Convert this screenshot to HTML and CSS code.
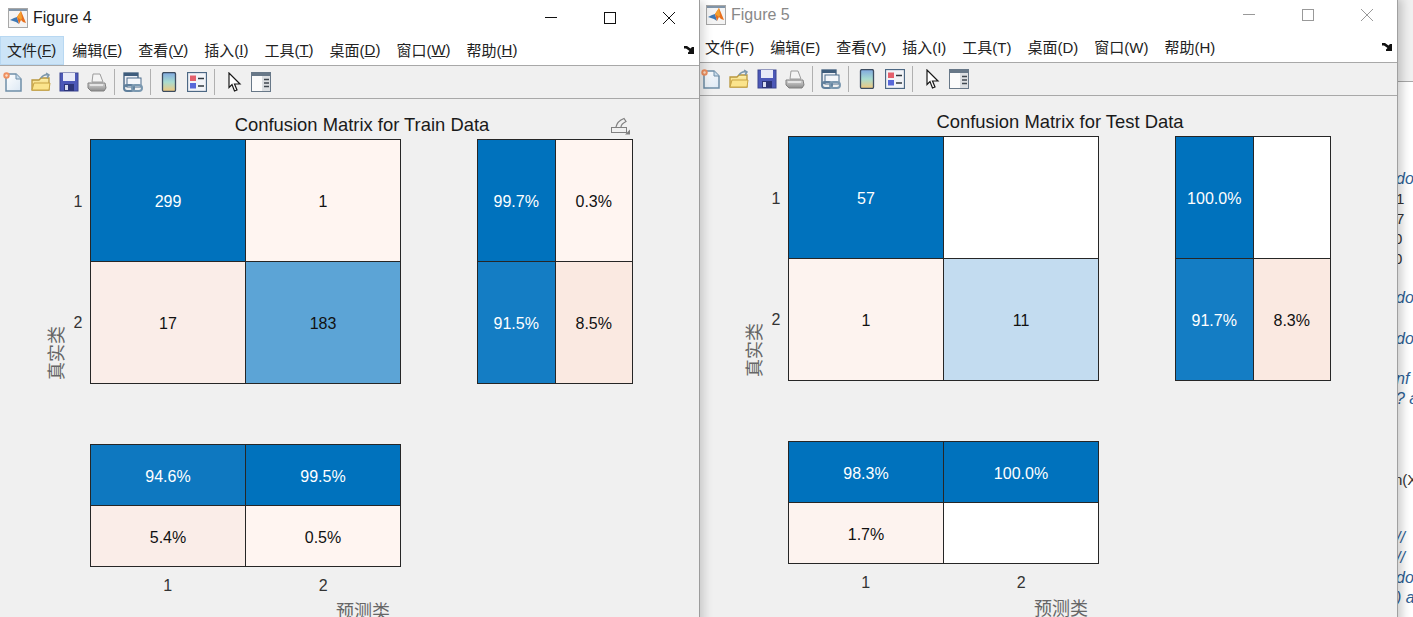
FILE: index.html
```html
<!DOCTYPE html>
<html lang="en">
<head>
    <meta charset="UTF-8">
    <title>Figure 4 / Figure 5</title>
    <link rel="stylesheet" href="styles.css">
</head>
<body>
    <svg class="defs" width="0" height="0">
        <defs>
            <linearGradient id="colorbar-fill" x1="0" y1="0" x2="0" y2="1">
                <stop offset="0" stop-color="#7fa8e0"/>
                <stop offset="0.5" stop-color="#a8dcd0"/>
                <stop offset="1" stop-color="#f2c87c"/>
            </linearGradient>
            <linearGradient id="folder-fill" x1="0" y1="0" x2="0" y2="1">
                <stop offset="0" stop-color="#fdf2b0"/>
                <stop offset="1" stop-color="#eec458"/>
            </linearGradient>
            <linearGradient id="page-fill" x1="0" y1="0" x2="1" y2="1">
                <stop offset="0" stop-color="#ffffff"/>
                <stop offset="1" stop-color="#dce8f4"/>
            </linearGradient>
            <linearGradient id="print-fill" x1="0" y1="0" x2="0" y2="1">
                <stop offset="0" stop-color="#d8d8d8"/>
                <stop offset="1" stop-color="#8c8c8c"/>
            </linearGradient>
            <symbol id="icon-logo" viewBox="0 0 20 20">
                <rect x="0.5" y="0.5" width="19" height="19" fill="#f4f4f4" stroke="#a8a8a8"/>
                <rect x="1" y="1" width="18" height="2" fill="#8094a8"/>
                <path d="M2 12l4-2 3-1 2 7-3-2z" fill="#3f78b4"/>
                <path d="M9 9l4-6 5 12-3-1-2-2-2 4z" fill="#e8701e"/>
                <path d="M13 3l1 7-1 2-4-3z" fill="#f4a030"/>
            </symbol>
            <symbol id="icon-new" viewBox="0 0 20 20">
                <path d="M3 2h10l5 5v12H3z" fill="url(#page-fill)" stroke="#6f8ea8" stroke-width="1.5"/>
                <path d="M13 2v5h5" fill="#c8dcec" stroke="#6f8ea8"/>
                <circle cx="3.5" cy="3.5" r="3.2" fill="#f09060"/>
                <circle cx="3.5" cy="3.5" r="1.2" fill="#fbe0c8"/>
            </symbol>
            <symbol id="icon-open" viewBox="0 0 20 20">
                <path d="M1 18V8h7l2-2h8v12z" fill="url(#folder-fill)" stroke="#b8963c" stroke-width="1.3"/>
                <path d="M1 18l2-7h16l-1 7z" fill="#fbe48c" stroke="#c8a444"/>
                <path d="M10 6c2-3 4-4 7-3M15 1l3 2-2 3" fill="none" stroke="#7c98ac" stroke-width="1.5"/>
            </symbol>
            <symbol id="icon-save" viewBox="0 0 20 20">
                <rect x="1" y="1" width="18" height="18" fill="#4c58b8" stroke="#3a4490"/>
                <rect x="4" y="1" width="12" height="8" fill="#e8eaf8"/>
                <rect x="5" y="12" width="10" height="7" fill="#2c3478"/>
                <rect x="6" y="13" width="3" height="5" fill="#d8dcf0"/>
            </symbol>
            <symbol id="icon-print" viewBox="0 0 20 20">
                <path d="M5 10l1-8h7l3 8z" fill="#f4f4f4" stroke="#9c9c9c"/>
                <path d="M1 11h17l1 5-2 3H4l-3-3z" fill="url(#print-fill)" stroke="#808080"/>
                <rect x="3" y="12" width="13" height="2" fill="#e4e4e4"/>
            </symbol>
            <symbol id="icon-link" viewBox="0 0 20 20">
                <rect x="1" y="1" width="14" height="13" fill="#eef0f6" stroke="#3e5c7c" stroke-width="1.3"/>
                <rect x="1" y="1" width="14" height="3" fill="#3e5c7c"/>
                <rect x="4" y="6" width="14" height="9" fill="#f4f6fa" stroke="#4c6c8c"/>
                <rect x="1" y="13" width="10" height="6" rx="3" fill="none" stroke="#5f7f9c" stroke-width="2"/>
                <rect x="9" y="13" width="10" height="6" rx="3" fill="none" stroke="#7a98b0" stroke-width="2"/>
            </symbol>
            <symbol id="icon-colorbar" viewBox="0 0 20 20">
                <rect x="3.5" y="0.5" width="13" height="19" rx="1.5" fill="url(#colorbar-fill)" stroke="#3c4c60" stroke-width="1.3"/>
            </symbol>
            <symbol id="icon-legend" viewBox="0 0 20 20">
                <rect x="0.5" y="0.5" width="19" height="19" fill="#f2f4f8" stroke="#4c6884" stroke-width="1.3"/>
                <rect x="3" y="3.5" width="6" height="5.5" fill="#e4606c"/>
                <rect x="3" y="11" width="6" height="5.5" fill="#5868d8"/>
                <path d="M11 6.5h6M11 14h6" stroke="#30383f" stroke-width="1.7"/>
            </symbol>
            <symbol id="icon-pointer" viewBox="0 0 20 20">
                <path d="M6 1v14.500l3-3L11.500 19l2.500-1-2.500-6H17z" fill="#fff" stroke="#181818" stroke-width="1.2"/>
            </symbol>
            <symbol id="icon-panel" viewBox="0 0 20 20">
                <rect x="0.5" y="0.5" width="19" height="19" fill="#dcdfe2" stroke="#687888"/>
                <rect x="0.5" y="0.5" width="19" height="3.5" fill="#687888"/>
                <rect x="1" y="4" width="10" height="15" fill="#fbfbfb"/>
                <path d="M13 7.5h5M13 11h5M13 14.5h5" stroke="#404850" stroke-width="1.5"/>
            </symbol>
            <symbol id="icon-dock" viewBox="0 0 10 8">
                <path d="M0 0h3l3.500 2.500L8 1l2 0v7H4V6.500l1.500-1.500L2 2.500H0z" fill="#111"/>
            </symbol>
        </defs>
    </svg>

    <div class="desktop">
        <div class="backdrop-bar"></div>
        <div class="backdrop-text">
            <i class="bt bt-1">do</i><span class="bt bt-2">1</span><span class="bt bt-3">7</span><span class="bt bt-4">0</span><span class="bt bt-5">0</span>
            <i class="bt bt-6">do</i><i class="bt bt-7">do</i><i class="bt bt-8">nf</i><i class="bt bt-9">? a</i>
            <span class="bt bt-10">n(X</span><i class="bt bt-11">//</i><i class="bt bt-12">//</i><i class="bt bt-13">do</i><i class="bt bt-14">) a</i>
        </div>

        <!-- Figure 5, behind -->
        <section class="window window-back">
            <header class="titlebar">
                <svg class="app-icon"><use href="#icon-logo"/></svg>
                <span class="title">Figure 5</span>
                <div class="caption-btns">
                    <svg class="cap" viewBox="0 0 12 12"><path d="M0 5.5h12"/></svg>
                    <svg class="cap" viewBox="0 0 12 12"><rect x="0.5" y="0.5" width="11" height="11"/></svg>
                    <svg class="cap" viewBox="0 0 12 12"><path d="M0 0l12 12M12 0L0 12"/></svg>
                </div>
            </header>
            <nav class="menubar">
                <span class="menu-item">文件(F)</span>
                <span class="menu-item">编辑(E)</span>
                <span class="menu-item">查看(V)</span>
                <span class="menu-item">插入(I)</span>
                <span class="menu-item">工具(T)</span>
                <span class="menu-item">桌面(D)</span>
                <span class="menu-item">窗口(W)</span>
                <span class="menu-item">帮助(H)</span>
                <svg class="dock"><use href="#icon-dock"/></svg>
            </nav>
            <div class="toolbar">
                <svg class="tool"><use href="#icon-new"/></svg>
                <svg class="tool"><use href="#icon-open"/></svg>
                <svg class="tool"><use href="#icon-save"/></svg>
                <svg class="tool"><use href="#icon-print"/></svg>
                <span class="tool-sep"></span>
                <svg class="tool"><use href="#icon-link"/></svg>
                <span class="tool-sep"></span>
                <svg class="tool"><use href="#icon-colorbar"/></svg>
                <svg class="tool"><use href="#icon-legend"/></svg>
                <span class="tool-sep"></span>
                <svg class="tool"><use href="#icon-pointer"/></svg>
                <svg class="tool"><use href="#icon-panel"/></svg>
            </div>
            <div class="canvas">
                <h2 class="plot-title">Confusion Matrix for Test Data</h2>
                <div class="plot">
                    <div class="ylabel-col"><span class="ylabel">真实类</span></div>
                    <div class="yticks"><span>1</span><span>2</span></div>
                    <div class="matrix m-main">
                        <div class="cell heat-full">57</div>
                        <div class="cell heat-none"></div>
                        <div class="cell heat-faint">1</div>
                        <div class="cell heat-pale">11</div>
                    </div>
                    <div class="matrix m-side">
                        <div class="cell heat-full">100.0%</div>
                        <div class="cell heat-none"></div>
                        <div class="cell heat-high">91.7%</div>
                        <div class="cell heat-peach">8.3%</div>
                    </div>
                    <div class="matrix m-bottom">
                        <div class="cell heat-full">98.3%</div>
                        <div class="cell heat-full">100.0%</div>
                        <div class="cell heat-faint">1.7%</div>
                        <div class="cell heat-none"></div>
                    </div>
                    <div class="xticks"><span>1</span><span>2</span></div>
                    <div class="xlabel">预测类</div>
                </div>
            </div>
        </section>

        <!-- Figure 4, in front -->
        <section class="window window-front">
            <header class="titlebar">
                <svg class="app-icon"><use href="#icon-logo"/></svg>
                <span class="title">Figure 4</span>
                <div class="caption-btns">
                    <svg class="cap" viewBox="0 0 12 12"><path d="M0 5.5h12"/></svg>
                    <svg class="cap" viewBox="0 0 12 12"><rect x="0.5" y="0.5" width="11" height="11"/></svg>
                    <svg class="cap" viewBox="0 0 12 12"><path d="M0 0l12 12M12 0L0 12"/></svg>
                </div>
            </header>
            <nav class="menubar">
                <span class="menu-item active">文件(<u>F</u>)</span>
                <span class="menu-item">编辑(<u>E</u>)</span>
                <span class="menu-item">查看(<u>V</u>)</span>
                <span class="menu-item">插入(<u>I</u>)</span>
                <span class="menu-item">工具(<u>T</u>)</span>
                <span class="menu-item">桌面(<u>D</u>)</span>
                <span class="menu-item">窗口(<u>W</u>)</span>
                <span class="menu-item">帮助(<u>H</u>)</span>
                <svg class="dock"><use href="#icon-dock"/></svg>
            </nav>
            <div class="toolbar">
                <svg class="tool"><use href="#icon-new"/></svg>
                <svg class="tool"><use href="#icon-open"/></svg>
                <svg class="tool"><use href="#icon-save"/></svg>
                <svg class="tool"><use href="#icon-print"/></svg>
                <span class="tool-sep"></span>
                <svg class="tool"><use href="#icon-link"/></svg>
                <span class="tool-sep"></span>
                <svg class="tool"><use href="#icon-colorbar"/></svg>
                <svg class="tool"><use href="#icon-legend"/></svg>
                <span class="tool-sep"></span>
                <svg class="tool"><use href="#icon-pointer"/></svg>
                <svg class="tool"><use href="#icon-panel"/></svg>
            </div>
            <div class="canvas">
                <h2 class="plot-title">Confusion Matrix for Train Data</h2>
                <svg class="brush" viewBox="0 0 21 18">
                    <rect x="1.5" y="10.5" width="15" height="5" fill="none" stroke="#808080"/>
                    <path d="M6 10C7 5 10 3 14 1.500l2 3C13 6 11 8 11 10" fill="none" stroke="#808080" stroke-width="1.2"/>
                    <path d="M15 17.500l5-5v5z" fill="#808080"/>
                </svg>
                <div class="plot">
                    <div class="ylabel-col"><span class="ylabel">真实类</span></div>
                    <div class="yticks"><span>1</span><span>2</span></div>
                    <div class="matrix m-main">
                        <div class="cell heat-full">299</div>
                        <div class="cell heat-trace">1</div>
                        <div class="cell heat-blush">17</div>
                        <div class="cell heat-mid">183</div>
                    </div>
                    <div class="matrix m-side">
                        <div class="cell heat-full">99.7%</div>
                        <div class="cell heat-trace">0.3%</div>
                        <div class="cell heat-high">91.5%</div>
                        <div class="cell heat-peach">8.5%</div>
                    </div>
                    <div class="matrix m-bottom">
                        <div class="cell heat-strong">94.6%</div>
                        <div class="cell heat-full">99.5%</div>
                        <div class="cell heat-blush">5.4%</div>
                        <div class="cell heat-trace">0.5%</div>
                    </div>
                    <div class="xticks"><span>1</span><span>2</span></div>
                    <div class="xlabel">预测类</div>
                </div>
            </div>
        </section>
    </div>
</body>
</html>
```

FILE: styles.css
```css
html, body {
    margin: 0;
    height: 100%;
    overflow: hidden;
    background: #fff;
}
.defs {
    position: absolute;
}
.desktop {
    position: relative;
    width: 1413px;
    height: 617px;
    overflow: hidden;
    font-family: "Liberation Sans", "Noto Sans CJK SC", Arial, sans-serif;
    color: #1a1a1a;
}

/* what shows of the editor behind the figures */
.backdrop-bar {
    position: absolute;
    left: 1397px;
    top: 0;
    width: 16px;
    height: 81px;
    background: #f0f0f0;
    border-bottom: 1px solid #a8a8a8;
}
.backdrop-text {
    font-family: "Liberation Sans", sans-serif;
    font-size: 15px;
    color: #333;
}
.bt {
    position: absolute;
    left: 1394px;
    white-space: nowrap;
    line-height: 18px;
}
i.bt {
    left: 1396px;
    color: #2d5f94;
    font-size: 16px;
}
.bt-1 { top: 170px; }
.bt-2 { top: 190px; left: 1396px; }
.bt-3 { top: 210px; left: 1396px; }
.bt-4 { top: 230px; }
.bt-5 { top: 250px; }
.bt-6 { top: 289px; }
.bt-7 { top: 330px; }
.bt-8 { top: 370px; }
.bt-9 { top: 390px; }
.bt-10 { top: 471px; }
.bt-11 { top: 529px; }
.bt-12 { top: 549px; }
.bt-13 { top: 569px; }
.bt-14 { top: 589px; }

.window {
    position: absolute;
    display: flex;
    flex-direction: column;
    background: #f0f0f0;
}
.window-front {
    left: 0;
    top: 0;
    width: 699px;
    height: 640px;
    box-shadow: 1px 0 0 #9c9c9c, 6px 0 9px -1px rgba(0, 0, 0, 0.16);
    z-index: 2;
}
.window-back {
    left: 698px;
    top: -3px;
    width: 699px;
    height: 640px;
    box-shadow: 1px 0 0 #a0a0a0, 6px 0 9px -1px rgba(0, 0, 0, 0.2);
}

.titlebar {
    display: flex;
    align-items: center;
    height: 36px;
    flex: none;
    box-sizing: border-box;
    padding-left: 8px;
    padding-bottom: 1px;
    background: #fff;
    font-size: 16px;
}
.app-icon {
    width: 20px;
    height: 20px;
    margin-right: 5px;
}
.window-back .title {
    color: #888;
}
.caption-btns {
    margin-left: auto;
    display: flex;
    gap: 47px;
    padding-right: 24px;
}
.cap {
    width: 12px;
    height: 12px;
    fill: none;
    stroke: #111;
    stroke-width: 1;
    overflow: visible;
}
.window-back .cap {
    stroke: #999;
}

.menubar {
    display: flex;
    align-items: center;
    height: 30px;
    flex: none;
    box-sizing: border-box;
    background: #fff;
    border-bottom: 1px solid #a8a8a8;
    font-size: 15px;
    color: #222;
}
.menu-item {
    display: flex;
    align-items: center;
    box-sizing: border-box;
    height: 29px;
    padding: 0 8px 2px 7px;
    margin-right: 1px;
    white-space: pre;
}
.menu-item.active {
    background: #cce4f7;
    box-shadow: inset 0 0 0 1px #b8d8f2;
}
.dock {
    width: 10px;
    height: 8px;
    margin-left: auto;
    margin-right: 5px;
    margin-bottom: 1px;
}

.toolbar {
    display: flex;
    align-items: center;
    gap: 8px;
    height: 33px;
    flex: none;
    box-sizing: border-box;
    padding-left: 3px;
    background: #f0f0f0;
    border-bottom: 1px solid #a8a8a8;
}
.tool {
    width: 20px;
    height: 20px;
    flex: none;
}
.tool-sep {
    width: 1px;
    height: 26px;
    margin-left: -1px;
    background: #b0b0b0;
}

.canvas {
    position: relative;
    flex: 1;
}
.plot-title {
    margin: 0;
    width: 724px;
    padding-top: 16px;
    text-align: center;
    font-size: 18.4px;
    font-weight: normal;
    line-height: 20px;
    color: #1a1a1a;
}
.brush {
    position: absolute;
    left: 610px;
    top: 18px;
    width: 21px;
    height: 18px;
}

.plot {
    display: grid;
    grid-template-columns: 66px 24px 311px 76px 156px;
    grid-template-rows: 245px 60px 123px 36px 20px;
    margin-top: 4px;
    font-size: 16px;
}
.ylabel-col {
    grid-column: 1;
    grid-row: 1;
    display: flex;
    align-items: center;
    justify-content: center;
    padding-left: 48px;
    padding-top: 183px;
}
.ylabel {
    flex: none;
    white-space: nowrap;
    transform: rotate(-90deg);
    font-size: 18px;
    line-height: 20px;
    color: #666;
}
.yticks {
    grid-column: 2;
    grid-row: 1;
    display: grid;
    grid-template-rows: 1fr 1fr;
    align-items: center;
    justify-items: center;
    padding-top: 2px;
    color: #333;
}
.matrix {
    display: grid;
    grid-template-columns: 1fr 1fr;
    grid-template-rows: 1fr 1fr;
    gap: 1px;
    background: #262626;
    border: 1px solid #262626;
}
.m-main {
    grid-column: 3;
    grid-row: 1;
}
.m-side {
    grid-column: 5;
    grid-row: 1;
}
.m-bottom {
    grid-column: 3;
    grid-row: 3;
}
.cell {
    display: flex;
    align-items: center;
    justify-content: center;
    padding-top: 2px;
    color: #111;
}
.m-bottom .cell {
    padding-top: 4px;
}
.heat-full { background: #0072bd; color: #fff; }
.heat-strong { background: #0e78c0; color: #fff; }
.heat-high { background: #147dc4; color: #fff; }
.heat-mid { background: #5ca4d6; }
.heat-pale { background: #c3dcf0; }
.heat-peach { background: #fae9e1; }
.heat-blush { background: #faede8; }
.heat-faint { background: #fdf3ef; }
.heat-trace { background: #fff5f1; }
.heat-none { background: #fff; }

.xticks {
    grid-column: 3;
    grid-row: 4;
    display: grid;
    grid-template-columns: 1fr 1fr;
    justify-items: center;
    align-items: center;
    padding-top: 2px;
    color: #333;
}
.xlabel {
    grid-column: 1 / 6;
    grid-row: 5;
    width: 726px;
    margin-top: -1px;
    text-align: center;
    font-size: 18px;
    line-height: 20px;
    color: #666;
}
```
